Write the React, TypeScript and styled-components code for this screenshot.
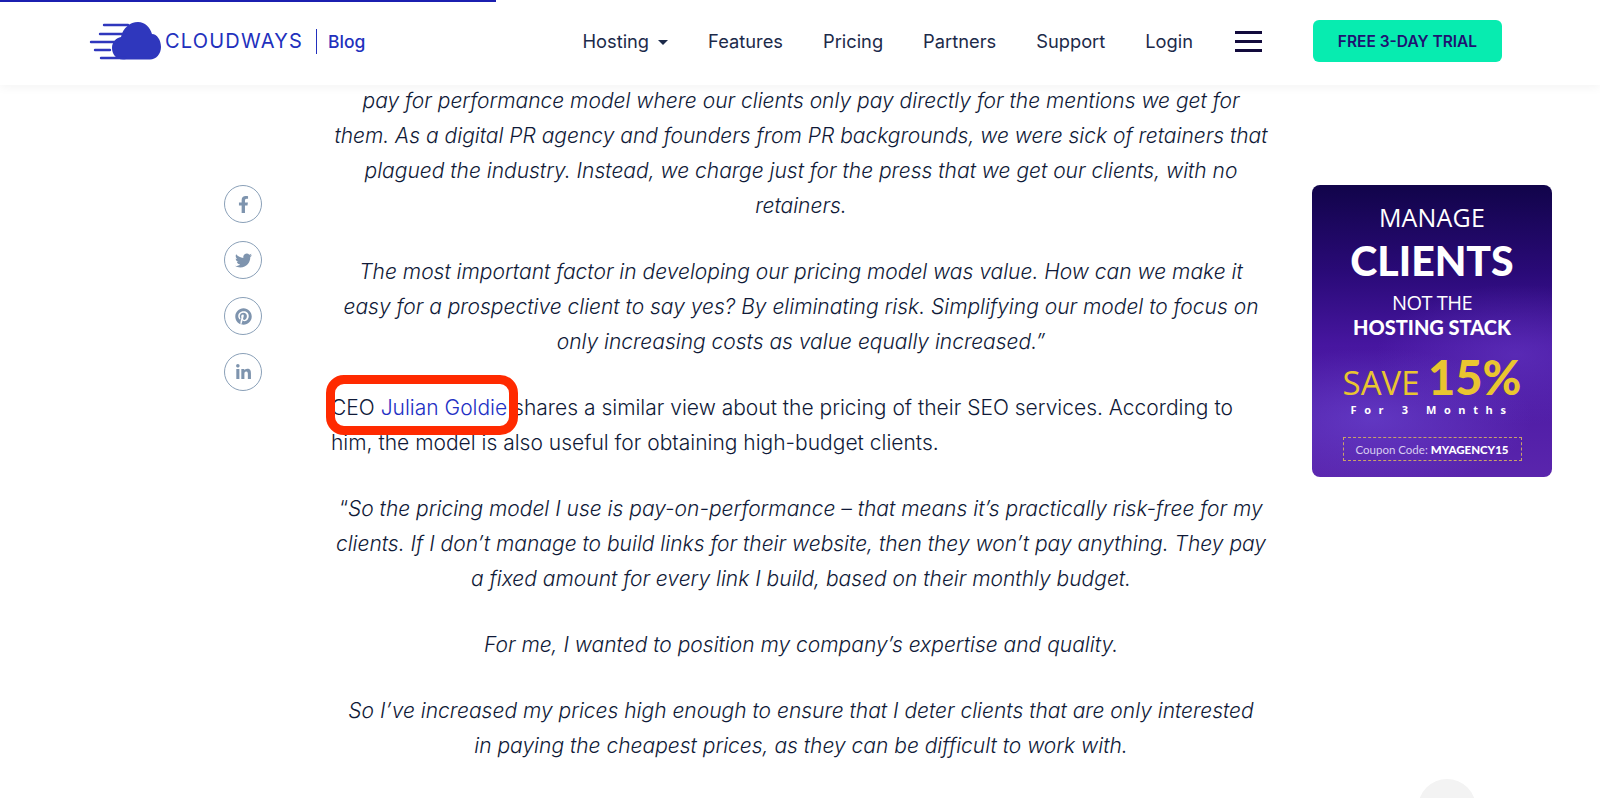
import React from 'react';
import styled, { createGlobalStyle } from 'styled-components';
import { FaFacebookF, FaTwitter, FaPinterest, FaLinkedinIn } from 'react-icons/fa';

const NAV_ITEMS = ['Features', 'Pricing', 'Partners', 'Support', 'Login'];

const App: React.FC = () => {
  return (
    <Page>
      <GlobalStyle />
      <Progress />
      <Header>
        <Logo href="#">
          <svg width="73" height="38" viewBox="0 0 73 38">
            <path
              d="M34 37.5C27 37.5 23 32 23 26C23 20 27 16 32 15C34 6 41 0 49 0C56 0 61 5 63 12C68 12 72 18 72 25C72 32 67 37.5 61 37.5Z"
              fill="#2f37bd"
            />
            <g stroke="#2f37bd" strokeWidth="2.4" strokeLinecap="round">
              <path d="M15 3H39" />
              <path d="M11 12H36" />
              <path d="M2 20H28" />
              <path d="M6 28H21" />
              <path d="M12 36H36" />
            </g>
          </svg>
          <LogoName>CLOUDWAYS</LogoName>
          <LogoDivider />
          <LogoBlog>Blog</LogoBlog>
        </Logo>
        <Nav>
          <NavLink>
            Hosting
            <Caret />
          </NavLink>
          {NAV_ITEMS.map((item) => (
            <NavLink key={item}>{item}</NavLink>
          ))}
          <Burger>
            <span />
            <span />
            <span />
          </Burger>
          <TrialButton>FREE 3-DAY TRIAL</TrialButton>
        </Nav>
      </Header>

      <Main>
        <SocialRail>
          <SocialIcon><FaFacebookF /></SocialIcon>
          <SocialIcon><FaTwitter /></SocialIcon>
          <SocialIcon><FaPinterest /></SocialIcon>
          <SocialIcon><FaLinkedinIn /></SocialIcon>
        </SocialRail>

        <Article>
          <Quote>
            pay for performance model where our clients only pay directly for the mentions we get for<br />
            them. As a digital PR agency and founders from PR backgrounds, we were sick of retainers that<br />
            plagued the industry. Instead, we charge just for the press that we get our clients, with no<br />
            retainers.
          </Quote>
          <Quote>
            The most important factor in developing our pricing model was value. How can we make it<br />
            easy for a prospective client to say yes? By eliminating risk. Simplifying our model to focus on<br />
            only increasing costs as value equally increased.”
          </Quote>
          <Paragraph>
            <Marked>
              CEO <TextLink>Julian Goldie</TextLink>
            </Marked>{' '}
            shares a similar view about the pricing of their SEO services. According to<br />
            him, the model is also useful for obtaining high-budget clients.
          </Paragraph>
          <Quote>
            <Upright>“</Upright>So the pricing model I use is pay-on-performance – that means it’s practically risk-free for my<br />
            clients. If I don’t manage to build links for their website, then they won’t pay anything. They pay<br />
            a fixed amount for every link I build, based on their monthly budget.
          </Quote>
          <Quote>For me, I wanted to position my company’s expertise and quality.</Quote>
          <Quote>
            So I’ve increased my prices high enough to ensure that I deter clients that are only interested<br />
            in paying the cheapest prices, as they can be difficult to work with.
          </Quote>
        </Article>

        <Aside>
          <Banner>
            <BannerManage>MANAGE</BannerManage>
            <BannerClients>CLIENTS</BannerClients>
            <BannerNot>NOT THE</BannerNot>
            <BannerStack>HOSTING STACK</BannerStack>
            <BannerSave>
              SAVE <strong>15%</strong>
            </BannerSave>
            <BannerMonths>For 3 Months</BannerMonths>
            <Coupon>
              Coupon Code: <strong>MYAGENCY15</strong>
            </Coupon>
          </Banner>
        </Aside>
      </Main>
      <ScrollTop />
    </Page>
  );
};

const GlobalStyle = createGlobalStyle`
  html, body {
    margin: 0;
    padding: 0;
    height: 100%;
    overflow: hidden;
    background: #fff;
  }
`;

const Page = styled.div`
  position: relative;
  height: 798px;
  overflow: hidden;
  background: #fff;
  font-family: Inter, "Open Sans", sans-serif;
  color: #101a38;
`;

const Progress = styled.div`
  position: absolute;
  top: 0;
  left: 0;
  width: 496px;
  height: 2px;
  background: #1b1fb0;
  z-index: 3;
`;

const Header = styled.header`
  position: relative;
  z-index: 2;
  height: 85px;
  box-sizing: border-box;
  display: flex;
  align-items: center;
  justify-content: space-between;
  padding: 0 98px 3px 89px;
  background: #fff;
  box-shadow: 0 2px 10px rgba(0, 0, 0, 0.05);
`;

const Logo = styled.a`
  display: flex;
  align-items: center;
  text-decoration: none;
  color: #2230bd;
  > svg {
    margin-right: 3px;
  }
`;

const LogoName = styled.span`
  font-family: Inter, sans-serif;
  font-size: 20px;
  font-weight: 400;
  letter-spacing: 1.2px;
`;

const LogoDivider = styled.span`
  width: 1px;
  height: 25px;
  margin: 0 11px 0 13px;
  background: #2230bd;
`;

const LogoBlog = styled.span`
  font-family: Inter, sans-serif;
  font-size: 17.5px;
  font-weight: 500;
`;

const Nav = styled.nav`
  display: flex;
  align-items: center;
  gap: 40px;
`;

const NavLink = styled.a`
  display: flex;
  align-items: center;
  font-size: 18.3px;
  font-weight: 400;
  color: #1c2a4a;
`;

const Caret = styled.i`
  width: 0;
  height: 0;
  margin-left: 9px;
  margin-top: 3px;
  border-left: 5px solid transparent;
  border-right: 5px solid transparent;
  border-top: 5px solid #1c2a4a;
`;

const Burger = styled.div`
  width: 27px;
  margin-left: 2px;
  display: flex;
  flex-direction: column;
  gap: 6px;
  > span {
    height: 3px;
    background: #120a3c;
  }
`;

const TrialButton = styled.button`
  width: 189px;
  height: 42px;
  margin-left: 11px;
  border: 0;
  border-radius: 6px;
  background: #07ecb0;
  color: #1f1270;
  font-family: Inter, sans-serif;
  font-size: 15.5px;
  font-weight: 600;
`;

const Main = styled.main`
  display: grid;
  grid-template-columns: 331px 940px 1fr;
`;

const SocialRail = styled.div`
  display: flex;
  flex-direction: column;
  align-items: flex-start;
  gap: 18px;
  padding: 100px 0 0 224px;
`;

const SocialIcon = styled.a`
  width: 38px;
  height: 38px;
  box-sizing: border-box;
  display: flex;
  align-items: center;
  justify-content: center;
  border: 1.5px solid #8aa0b8;
  border-radius: 50%;
  color: #7e94ae;
  font-size: 17px;
`;

const Article = styled.article`
  display: flex;
  flex-direction: column;
  gap: 31px;
  margin-top: -2px;
  font-size: 21px;
  font-weight: 300;
  line-height: 35px;
  white-space: nowrap;
`;

const Quote = styled.p`
  margin: 0;
  text-align: center;
  font-style: italic;
`;

const Upright = styled.span`
  font-style: normal;
`;

const Paragraph = styled.p`
  margin: 0;
`;

const Marked = styled.span`
  position: relative;
  &::after {
    content: '';
    position: absolute;
    left: -5px;
    right: -11px;
    top: -20px;
    bottom: -15px;
    border: 9px solid #ff2a00;
    border-radius: 18px;
  }
`;

const TextLink = styled.a`
  color: #2230c4;
`;

const Aside = styled.aside`
  padding: 100px 0 0 41px;
`;

const Banner = styled.div`
  width: 240px;
  height: 292px;
  box-sizing: border-box;
  padding-top: 17px;
  display: flex;
  flex-direction: column;
  align-items: center;
  border-radius: 8px;
  color: #fff;
  font-family: "Open Sans", sans-serif;
  background:
    radial-gradient(ellipse 160px 70px at 25% 80%, rgba(110, 75, 215, 0.55), transparent),
    radial-gradient(ellipse 140px 70px at 85% 58%, rgba(105, 60, 200, 0.5), transparent),
    linear-gradient(180deg, #11044a 0%, #2a0a78 30%, #4716a0 55%, #5a25ad 100%);
`;

const BannerManage = styled.div`
  font-size: 25px;
  line-height: 30px;
  letter-spacing: 0.2px;
`;

const BannerClients = styled.div`
  margin-top: 5px;
  font-size: 41px;
  line-height: 48px;
  font-family: Lato, sans-serif;
  font-weight: 900;
`;

const BannerNot = styled.div`
  margin-top: 5px;
  font-size: 20px;
  line-height: 26px;
  letter-spacing: -0.5px;
`;

const BannerStack = styled.div`
  margin-top: -2px;
  font-family: Lato, sans-serif;
  font-size: 20px;
  line-height: 26px;
  font-weight: 900;
`;

const BannerSave = styled.div`
  margin-top: 15px;
  font-size: 33px;
  line-height: 44px;
  color: #e9c530;
  > strong {
    font-family: Lato, sans-serif;
    font-size: 47px;
    font-weight: 900;
  }
`;

const BannerMonths = styled.div`
  margin-top: -3px;
  font-size: 11px;
  line-height: 16px;
  font-weight: 700;
  letter-spacing: 7.6px;
  white-space: nowrap;
`;

const Coupon = styled.div`
  margin-top: 19px;
  width: 179px;
  height: 24px;
  box-sizing: border-box;
  border: 1px dashed #c9a26a;
  display: flex;
  align-items: center;
  justify-content: center;
  gap: 3px;
  font-family: Lato, sans-serif;
  font-size: 11.5px;
  color: #d8cdf0;
  white-space: nowrap;
  > strong {
    color: #fff;
    font-weight: 900;
  }
`;

const ScrollTop = styled.div`
  position: fixed;
  left: 1418px;
  top: 779px;
  width: 58px;
  height: 58px;
  border-radius: 50%;
  background: #f3f3f3;
`;

export default App;
